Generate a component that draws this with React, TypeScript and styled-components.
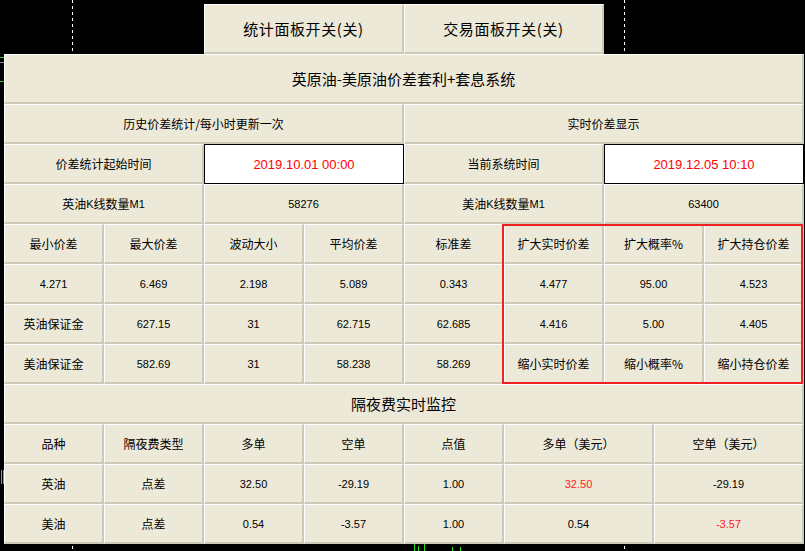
import React from "react";
import styled, { createGlobalStyle } from "styled-components";

const GlobalStyle = createGlobalStyle`
  html, body { margin: 0; padding: 0; background: #000; }
  body { font-family: "Noto Sans CJK SC", "Noto Sans", sans-serif; }
  * { box-sizing: border-box; }
`;

const CJK = `"Noto Sans CJK SC", "Noto Sans", sans-serif`;
const LATIN = `"Liberation Sans", Arial, "Noto Sans CJK SC", sans-serif`;

const Page = styled.div`
  width: 805px;
  height: 551px;
  overflow: hidden;
  background-color: #000;
  background-image:
    repeating-linear-gradient(to bottom, #fff 0 3px, transparent 3px 6px),
    repeating-linear-gradient(to bottom, #fff 0 3px, transparent 3px 6px),
    linear-gradient(#2fbf2f, #2fbf2f),
    linear-gradient(#8a8a8a, #8a8a8a),
    linear-gradient(#2fbf2f, #2fbf2f),
    linear-gradient(#19e019, #19e019),
    linear-gradient(#19e019, #19e019),
    linear-gradient(#19e019, #19e019),
    linear-gradient(#19e019, #19e019),
    linear-gradient(#19e019, #19e019),
    linear-gradient(#19e019, #19e019),
    linear-gradient(#19e019, #19e019);
  background-size:
    1px 100%,
    1px 100%,
    4px 1px,
    4px 1px,
    4px 1px,
    1px 14px,
    1px 14px,
    1px 7px,
    1px 5px,
    1px 7px,
    1px 4px,
    1px 4px;
  background-position:
    72px 0,
    624px 0,
    0 57px,
    0 62px,
    0 81px,
    1px 470px,
    3px 470px,
    414px 544px,
    418px 546px,
    424px 544px,
    452px 547px,
    460px 547px;
  background-repeat: no-repeat;
  padding: 4px 0 0 4px;
`;

const TabBar = styled.div`
  display: flex;
  padding-left: 200px;
`;

const Bevel = styled.div`
  display: flex;
  align-items: center;
  justify-content: center;
  background: #ece9d8;
  border-top: 1px solid #ffffff;
  border-left: 1px solid #ffffff;
  border-right: 2px solid #cdc9b8;
  border-bottom: 2px solid #cdc9b8;
  color: #000;
  white-space: nowrap;
`;

const TabButton = styled(Bevel)`
  width: 200px;
  height: 50px;
  font-family: ${CJK};
  font-size: 15px;
  letter-spacing: 0.6px;
`;

const Panel = styled.div`
  position: relative;
  width: 800px;
  display: flex;
  flex-direction: column;
`;

const Row = styled.div`
  display: flex;
`;

const Cell = styled(Bevel)<{ $w: number; $h?: number; $num?: boolean; $title?: boolean; $red?: boolean }>`
  width: ${(p) => p.$w}px;
  height: ${(p) => p.$h ?? 40}px;
  font-family: ${(p) => (p.$num ? LATIN : CJK)};
  font-size: ${(p) => (p.$title ? 15 : p.$num ? 11 : 12)}px;
  color: ${(p) => (p.$red ? "#ff1a1a" : "#000")};
  padding-top: ${(p) => (p.$num ? 1 : 0)}px;
`;

const EditBox = styled.div`
  width: 200px;
  height: 40px;
  background: #fff;
  border: 1px solid #000;
  display: flex;
  align-items: center;
  justify-content: center;
  font-family: ${LATIN};
  font-size: 13px;
  color: #ff0000;
  padding-top: 1px;
`;

const Latin = styled.span`
  font-family: ${LATIN};
  font-size: 11px;
`;

const Highlight = styled.div`
  position: absolute;
  left: 498px;
  top: 170px;
  width: 301px;
  height: 160px;
  border: 2px solid #ee2222;
  pointer-events: none;
`;

const headers = ["最小价差", "最大价差", "波动大小", "平均价差", "标准差", "扩大实时价差", "扩大概率%", "扩大持仓价差"];

type C = { t: string; num?: boolean; red?: boolean };

const statRows: C[][] = [
  [
    { t: "4.271", num: true },
    { t: "6.469", num: true },
    { t: "2.198", num: true },
    { t: "5.089", num: true },
    { t: "0.343", num: true },
    { t: "4.477", num: true },
    { t: "95.00", num: true },
    { t: "4.523", num: true },
  ],
  [
    { t: "英油保证金" },
    { t: "627.15", num: true },
    { t: "31", num: true },
    { t: "62.715", num: true },
    { t: "62.685", num: true },
    { t: "4.416", num: true },
    { t: "5.00", num: true },
    { t: "4.405", num: true },
  ],
  [
    { t: "美油保证金" },
    { t: "582.69", num: true },
    { t: "31", num: true },
    { t: "58.238", num: true },
    { t: "58.269", num: true },
    { t: "缩小实时价差" },
    { t: "缩小概率%" },
    { t: "缩小持仓价差" },
  ],
];

const swapWidths = [100, 100, 100, 100, 100, 150, 150];
const swapHeader = ["品种", "隔夜费类型", "多单", "空单", "点值", "多单（美元）", "空单（美元）"];
const swapRows: C[][] = [
  [
    { t: "英油" },
    { t: "点差" },
    { t: "32.50", num: true },
    { t: "-29.19", num: true },
    { t: "1.00", num: true },
    { t: "32.50", num: true, red: true },
    { t: "-29.19", num: true },
  ],
  [
    { t: "美油" },
    { t: "点差" },
    { t: "0.54", num: true },
    { t: "-3.57", num: true },
    { t: "1.00", num: true },
    { t: "0.54", num: true },
    { t: "-3.57", num: true, red: true },
  ],
];

export default function App() {
  return (
    <Page>
      <GlobalStyle />
      <TabBar>
        <TabButton>统计面板开关(关)</TabButton>
        <TabButton>交易面板开关(关)</TabButton>
      </TabBar>
      <Panel>
        <Row>
          <Cell $w={800} $h={50} $title>
            英原油-美原油价差套利+套息系统
          </Cell>
        </Row>
        <Row>
          <Cell $w={400}>历史价差统计/每小时更新一次</Cell>
          <Cell $w={400}>实时价差显示</Cell>
        </Row>
        <Row>
          <Cell $w={200}>价差统计起始时间</Cell>
          <EditBox>2019.10.01 00:00</EditBox>
          <Cell $w={200}>当前系统时间</Cell>
          <EditBox>2019.12.05 10:10</EditBox>
        </Row>
        <Row>
          <Cell $w={200}>
            英油<Latin>K</Latin>线数量<Latin>M1</Latin>
          </Cell>
          <Cell $w={200} $num>
            58276
          </Cell>
          <Cell $w={200}>
            美油<Latin>K</Latin>线数量<Latin>M1</Latin>
          </Cell>
          <Cell $w={200} $num>
            63400
          </Cell>
        </Row>
        <Row>
          {headers.map((h) => (
            <Cell key={h} $w={100}>
              {h}
            </Cell>
          ))}
        </Row>
        {statRows.map((r, i) => (
          <Row key={i}>
            {r.map((c, j) => (
              <Cell key={j} $w={100} $num={c.num} $red={c.red}>
                {c.t}
              </Cell>
            ))}
          </Row>
        ))}
        <Row>
          <Cell $w={800} $title>
            隔夜费实时监控
          </Cell>
        </Row>
        <Row>
          {swapHeader.map((h, j) => (
            <Cell key={h} $w={swapWidths[j]}>
              {h}
            </Cell>
          ))}
        </Row>
        {swapRows.map((r, i) => (
          <Row key={i}>
            {r.map((c, j) => (
              <Cell key={j} $w={swapWidths[j]} $num={c.num} $red={c.red}>
                {c.t}
              </Cell>
            ))}
          </Row>
        ))}
        <Highlight />
      </Panel>
    </Page>
  );
}
